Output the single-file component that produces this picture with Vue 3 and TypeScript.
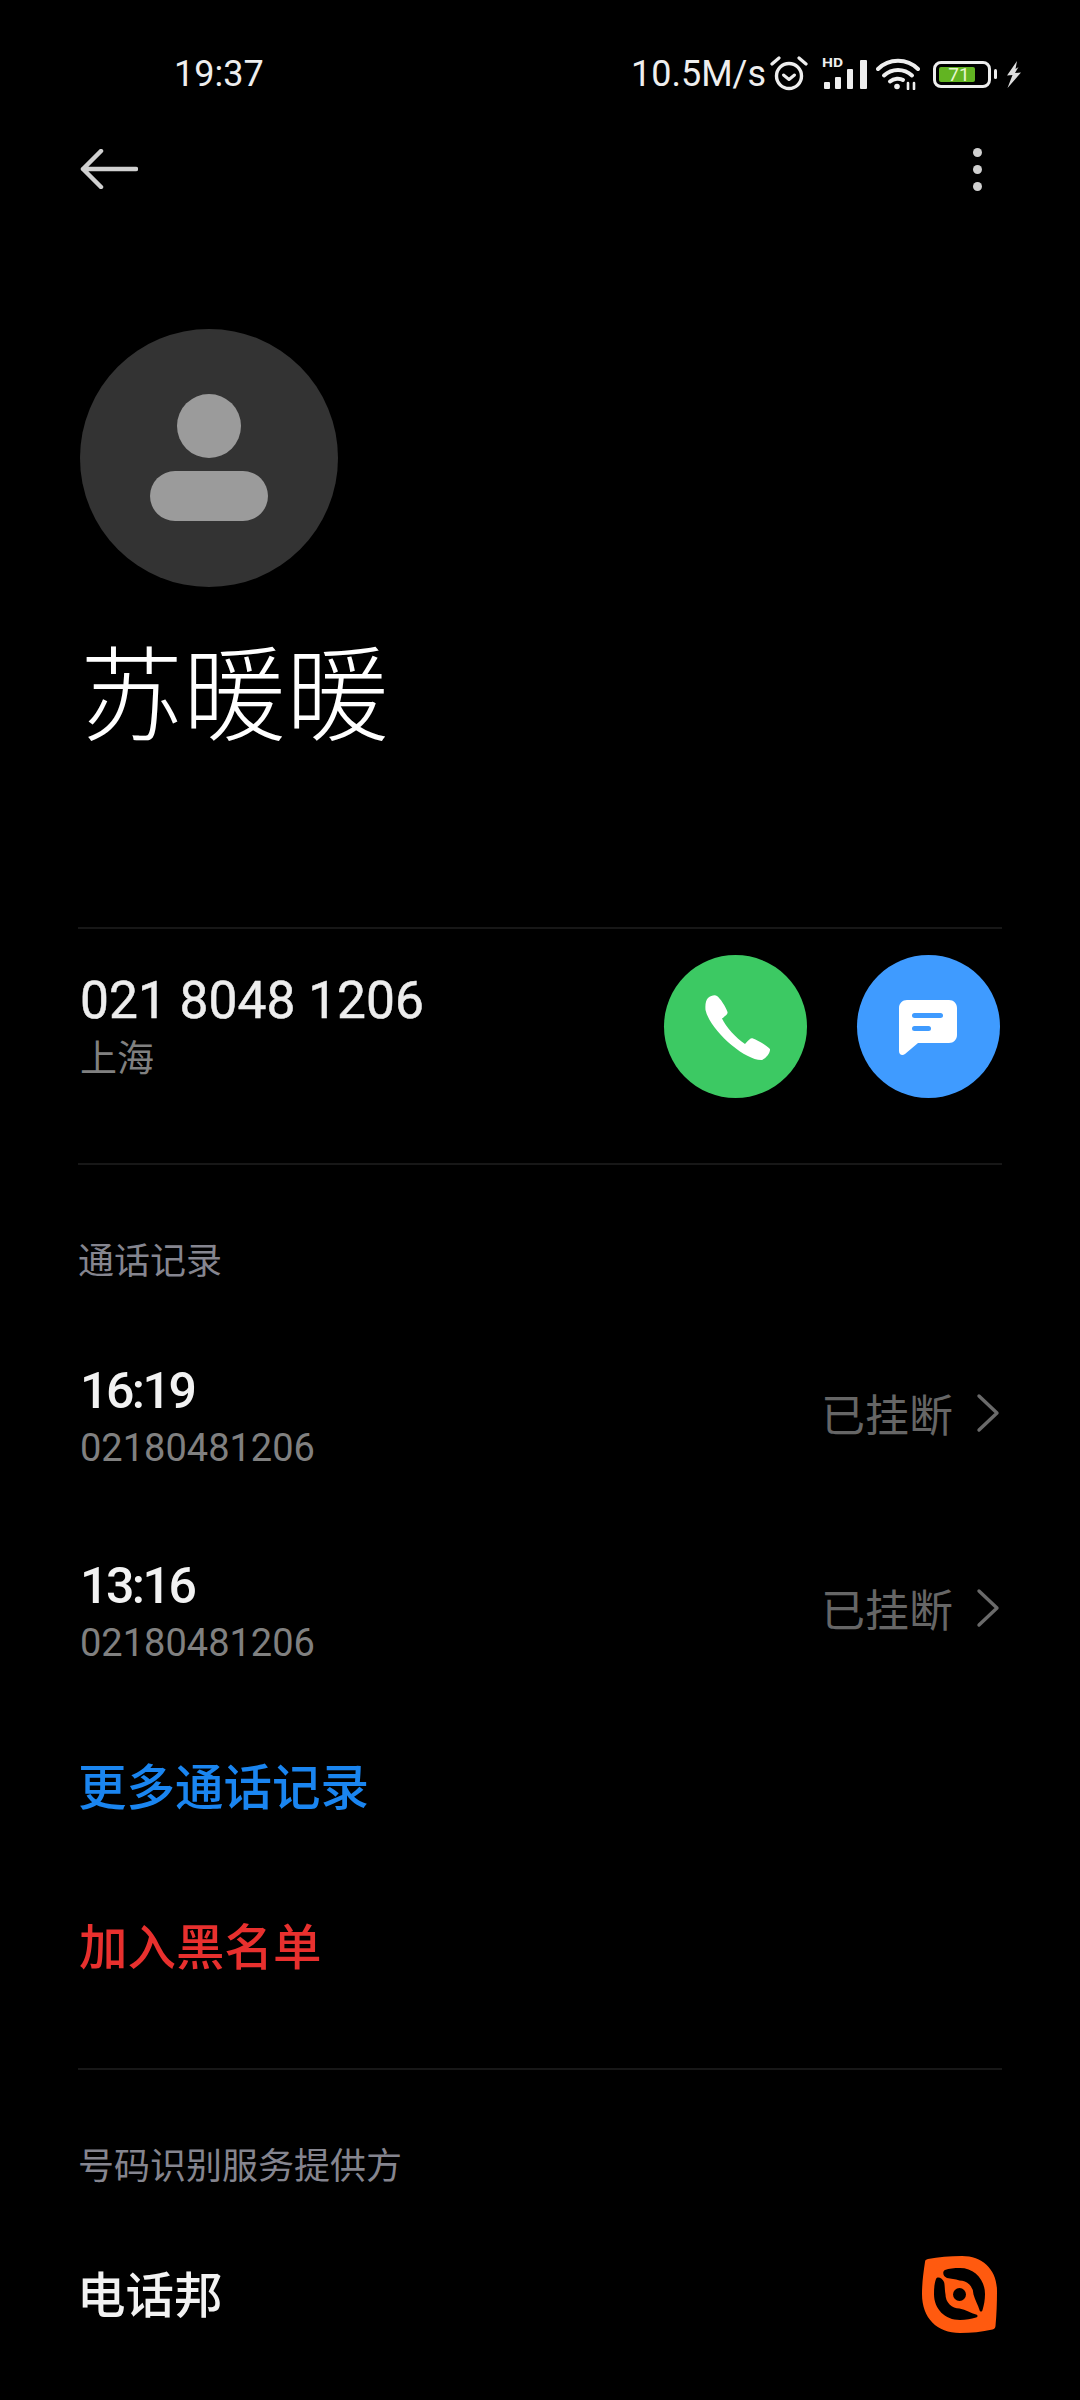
<script setup lang="ts">
const calls = [
  { time: '16:19', num: '02180481206', state: '已挂断' },
  { time: '13:16', num: '02180481206', state: '已挂断' }
]
</script>
<template>
  <div class="page">
    <div class="status">
      <span class="clock">19:37</span>
      <div class="statusRight">
        <span class="speed">10.5M/s</span>
        <svg class="alarm" width="38" height="36" viewBox="0 0 38 36" fill="none" stroke="#eee">
          <circle cx="19" cy="20" r="12.500" stroke-width="3.400" />
          <path d="M13.500 19l5.500 4.500 5.500-4.500" stroke-width="3" stroke-linecap="round" stroke-linejoin="round" />
          <path d="M2 8l7-6M36 8l-7-6" stroke-width="3.200" stroke-linecap="round" />
        </svg>
        <svg class="signal" width="46" height="34" viewBox="0 0 46 34" fill="#eee">
          <text x="0" y="12" font-size="12" font-weight="700" font-family="Roboto, sans-serif" textLength="21" lengthAdjust="spacingAndGlyphs">HD</text>
          <rect x="2" y="27" width="6" height="7" rx="1" />
          <rect x="13" y="22" width="6" height="12" rx="1" />
          <rect x="25" y="14" width="6" height="20" rx="1" />
          <rect x="38" y="5" width="7" height="29" rx="1" />
        </svg>
        <svg class="wifi" width="44" height="32" viewBox="0 0 44 32" fill="none" stroke="#eee" stroke-width="4" stroke-linecap="round">
          <path d="M2 11C13 0 31 0 42 11" />
          <path d="M8 17.500C16 10 28 10 36 17.500" />
          <path d="M14 23.500C18 20 24 20 27 22" />
          <circle cx="21" cy="28.500" r="2.800" fill="#eee" stroke="none" />
          <path d="M32 25v6M38 25v6" stroke-width="2.600" />
        </svg>
        <div class="battery">
          <div class="batteryBody"><span class="batteryFill">71</span></div>
          <i class="batteryCap"></i>
        </div>
        <svg class="bolt" width="16" height="27" viewBox="0 0 16 27" fill="#ddd">
          <path d="M11 0L1 14.500l5.500-.500L1.500 27 15 11.500l-6 .500 3.500-6L9.500 8z" />
        </svg>
      </div>
    </div>

    <div class="nav">
      <svg width="58" height="40" viewBox="0 0 58 40" fill="none" stroke="#d0d0d0" stroke-width="4.500" stroke-linecap="round" stroke-linejoin="round">
        <path d="M56 20H3M21 2L3 20l18 18" />
      </svg>
      <div class="dots"><i></i><i></i><i></i></div>
    </div>

    <div class="avatar">
      <div class="avatarHead"></div>
      <div class="avatarBody"></div>
    </div>
    <div class="name">苏暖暖</div>

    <div class="line lineNumber"></div>
    <div class="numberRow">
      <div class="numberText">
        <div class="number">021 8048 1206</div>
        <div class="place">上海</div>
      </div>
      <div class="actions">
        <div class="circle green">
          <svg class="phone" width="66" height="66" viewBox="0 0 66 66" fill="#fff">
            <path d="M3 3C6 .5 10-.5 12 1c3 2 9 11 10.500 16 .5 2-1.500 3.500-5.500 6.500C21 32 31 43 40 49c4-4.500 6-6.500 8-5.500 5 2 13 6.500 17 10.500.5 3-3 9-8 11C40 66 5 35 .5 15 0 9 1 5 3 3z" />
          </svg>
        </div>
        <div class="circle blue">
          <svg class="chat" width="58" height="56" viewBox="0 0 58 56" fill="#fff">
            <path d="M8 0h42c4.500 0 8 3.500 8 8v27c0 4.500-3.500 8-8 8H19L6 54c-2.500 2-6 1-6-3V8c0-4.500 3.500-8 8-8z" />
            <rect x="13" y="13" width="31" height="5" rx="2.500" fill="#3f9bff" />
            <rect x="13" y="26" width="19" height="5" rx="2.500" fill="#3f9bff" />
          </svg>
        </div>
      </div>
    </div>
    <div class="line"></div>

    <div class="title titleCalls">通话记录</div>
    <div class="calls">
      <div class="callRow" v-for="(item, index) in calls" :key="index">
        <div class="callLeft">
          <div class="callTime">{{ item.time }}</div>
          <div class="callNum">{{ item.num }}</div>
        </div>
        <div class="callRight">
          <span>{{ item.state }}</span>
          <svg width="24" height="40" viewBox="0 0 24 40" fill="none" stroke="#6a6a6a" stroke-width="3.400" stroke-linecap="round" stroke-linejoin="round">
            <path d="M3 3l18 17L3 37" />
          </svg>
        </div>
      </div>
    </div>

    <div class="link more">更多通话记录</div>
    <div class="link block">加入黑名单</div>
    <div class="line lineProvider"></div>

    <div class="title titleProvider">号码识别服务提供方</div>
    <div class="providerRow">
      <span class="provider">电话邦</span>
      <svg width="76" height="78" viewBox="0 0 76 78">
        <path fill="#ff5a0f" d="M3 6C3 4 4 3.500 6 3 16 1 28 0 40 0 61 0 75 14 75 35c0 12-.5 24-1.500 35-.2 2-1 3-3 3.500C60 76 49 77 38 77 15 77 0 62 0 38 0 27 1.500 16 3 6z" />
        <path fill="#000" d="M23 14c4-1.500 9-2 15-2 14 0 25 11 25 26 0 6-1 11-2.500 16-.5 2-2.500 2-3 0C56 49 53 44 51.500 38.500A14 14 0 0 0 37.500 24.500C33 23 29 23 25 22c-4-1.500-5-6.500-2-8z" />
        <path fill="#000" d="M14 23c-1.500 4-2 9-2 15 0 15 11 26 26 26 6 0 11-1 16-2.500 2-.5 2-2.500 0-3C49 57 44 54 37.500 52.500A14 14 0 0 1 23.500 38.500C22.500 33 23 29 22 26c-1.500-4-6.500-6-8-3z" />
        <circle cx="37.500" cy="38.500" r="6.500" fill="#000" />
      </svg>
    </div>
  </div>
</template>
<style>
html,
body {
  background: #000;
}
</style>
<style scoped>
.page {
  width: 1080px;
  height: 2400px;
  overflow: hidden;
  background: #000;
  color: #fff;
  font-family: Roboto, "Noto Sans CJK SC", sans-serif;
}

.status {
  height: 68px;
  padding: 40px 58px 0 174px;
  display: flex;
  justify-content: space-between;
  align-items: center;
}

.clock,
.speed {
  font-size: 36px;
  color: #eee;
  line-height: 68px;
}

.statusRight {
  display: flex;
  align-items: center;
}

.speed {
  margin-right: 4px;
}

.signal {
  margin: 0 0 4px 14px;
}

.wifi {
  margin-left: 8px;
}

.battery {
  margin-left: 13px;
  display: flex;
  align-items: center;
}

.batteryBody {
  width: 58px;
  height: 27px;
  box-sizing: border-box;
  border: 3px solid #eee;
  border-radius: 8px;
  padding: 3px;
}

.batteryFill {
  display: block;
  width: 36px;
  height: 15px;
  background: #62b422;
  border-radius: 2px;
  color: #e8f7d0;
  font-size: 19px;
  line-height: 15px;
  text-align: center;
  padding-left: 4px;
  box-sizing: border-box;
}

.batteryCap {
  width: 3px;
  height: 10px;
  margin-left: 3px;
  background: #eee;
  border-radius: 2px;
}

.bolt {
  margin-left: 9px;
}

.nav {
  display: flex;
  justify-content: space-between;
  align-items: center;
  height: 42px;
  margin-top: 40px;
  padding: 0 98px 0 80px;
}

.dots {
  display: flex;
  flex-direction: column;
  gap: 8px;
}

.dots i {
  width: 9px;
  height: 9px;
  border-radius: 50%;
  background: #d0d0d0;
}

.avatar {
  width: 258px;
  height: 258px;
  margin: 139px 0 0 80px;
  border-radius: 50%;
  background: #333;
  display: flex;
  flex-direction: column;
  align-items: center;
  padding-top: 65px;
  box-sizing: border-box;
}

.avatarHead {
  width: 64px;
  height: 64px;
  border-radius: 50%;
  background: #9b9b9b;
}

.avatarBody {
  width: 118px;
  height: 50px;
  margin-top: 13px;
  border-radius: 25px;
  background: #9b9b9b;
}

.name {
  margin: 51px 0 0 80px;
  font-size: 103px;
  line-height: 120px;
  font-weight: 300;
  color: #fff;
}

.line {
  height: 2px;
  margin: 0 78px;
  background: #171717;
}

.lineNumber {
  margin-top: 169px;
}

.numberRow {
  display: flex;
  justify-content: space-between;
  align-items: center;
  height: 234px;
  padding: 0 80px 40px 80px;
  box-sizing: border-box;
}

.numberText {
  padding-top: 4px;
}

.number {
  font-size: 51.5px;
  line-height: 64px;
  font-weight: 400;
  color: #ededed;
  -webkit-text-stroke: 0.5px #ededed;
}

.place {
  font-size: 37px;
  line-height: 54px;
  color: #808080;
}

.actions {
  display: flex;
  gap: 50px;
}

.circle {
  width: 143px;
  height: 143px;
  border-radius: 50%;
  display: flex;
  align-items: center;
  justify-content: center;
}

.green {
  background: #3cc963;
}

.blue {
  background: #3f9bff;
}

.phone {
  margin: 4px 0 0 5px;
}

.chat {
  margin: 4px 2px 0 0;
}

.title {
  font-size: 36px;
  line-height: 48px;
  color: #85858f;
  margin-left: 78px;
}

.titleCalls {
  margin-top: 73px;
}

.calls {
  margin-top: 29px;
}

.callRow {
  display: flex;
  justify-content: space-between;
  align-items: center;
  height: 195px;
  padding: 0 80px;
}

.callLeft {
  padding-top: 8px;
}

.callTime {
  font-size: 50px;
  line-height: 62px;
  letter-spacing: -2.5px;
  font-weight: 500;
  color: #f2f2f2;
}

.callNum {
  font-size: 38px;
  line-height: 52px;
  color: #808080;
}

.callRight {
  display: flex;
  align-items: center;
  gap: 23px;
  font-size: 44px;
  color: #666;
}

.link {
  font-size: 48.5px;
  line-height: 64px;
  font-weight: 500;
  margin-left: 78px;
}

.more {
  margin-top: 52px;
  color: #1a85f0;
}

.block {
  margin-top: 96px;
  margin-left: 79px;
  color: #e8302e;
}

.lineProvider {
  margin-top: 87px;
}

.titleProvider {
  margin-top: 73px;
}

.providerRow {
  display: flex;
  justify-content: space-between;
  align-items: center;
  margin-top: 65px;
  padding: 0 82px 0 77px;
}

.provider {
  font-size: 48.5px;
  font-weight: 500;
  color: #f2f2f2;
  margin-bottom: 6px;
}
</style>
